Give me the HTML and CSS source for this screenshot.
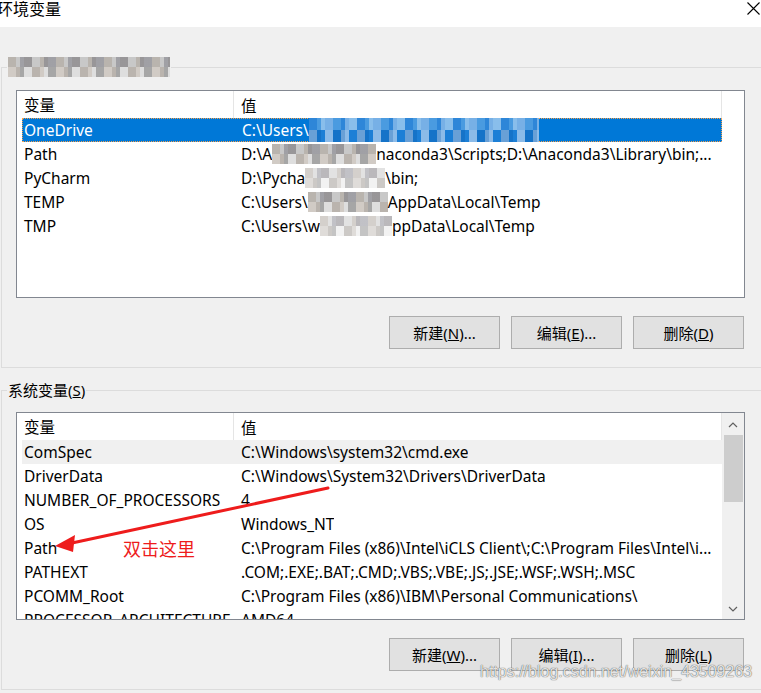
FILE: index.html
```html
<!DOCTYPE html>
<html>
  <head>
    <meta charset="UTF-8">
    <title>环境变量</title>
    <link rel="stylesheet" href="styles.css">
  </head>
  <body>
    <div class="titlebar">
      <span class="title">环境变量</span>
      <svg class="close" width="13" height="13" viewBox="0 0 13 13">
        <path d="M0.5 0.5 L12.5 12.5 M12.5 0.5 L0.5 12.5" stroke="#000" stroke-width="1.1" fill="none"/>
      </svg>
    </div>

    <fieldset class="group first">
      <legend><span class="mz mz-gray legend-blur"></span></legend>
      <div class="inner">
        <div class="list">
          <div class="list-main">
            <div class="row head"><span class="c1">变量</span><span class="c2">值</span></div>
            <div class="row sel"><span class="c1">OneDrive</span><span class="c2">C:\Users\<span class="mz mz-blue" style="width:230px"></span></span></div>
            <div class="row"><span class="c1">Path</span><span class="c2">D:\A<span class="mz mz-gray" style="width:104px"></span>naconda3\Scripts;D:\Anaconda3\Library\bin;...</span></div>
            <div class="row"><span class="c1">PyCharm</span><span class="c2">D:\Pycha<span class="mz mz-light" style="width:80px"></span>\bin;</span></div>
            <div class="row"><span class="c1">TEMP</span><span class="c2">C:\Users\<span class="mz mz-gray" style="width:80px"></span>AppData\Local\Temp</span></div>
            <div class="row"><span class="c1">TMP</span><span class="c2">C:\Users\w<span class="mz mz-light" style="width:72px"></span>ppData\Local\Temp</span></div>
          </div>
        </div>
        <div class="buttons">
          <button>新建(<u>N</u>)...</button>
          <button>编辑(<u>E</u>)...</button>
          <button>删除(<u>D</u>)</button>
        </div>
      </div>
    </fieldset>

    <fieldset class="group second">
      <legend>系统变量(<u>S</u>)</legend>
      <div class="inner">
        <div class="list">
          <div class="list-main">
            <div class="row head"><span class="c1">变量</span><span class="c2">值</span></div>
            <div class="row hover"><span class="c1">ComSpec</span><span class="c2">C:\Windows\system32\cmd.exe</span></div>
            <div class="row"><span class="c1">DriverData</span><span class="c2">C:\Windows\System32\Drivers\DriverData</span></div>
            <div class="row"><span class="c1">NUMBER_OF_PROCESSORS</span><span class="c2">4</span></div>
            <div class="row"><span class="c1">OS</span><span class="c2">Windows_NT</span></div>
            <div class="row"><span class="c1">Path</span><span class="c2">C:\Program Files (x86)\Intel\iCLS Client\;C:\Program Files\Intel\i...</span></div>
            <div class="row"><span class="c1">PATHEXT</span><span class="c2">.COM;.EXE;.BAT;.CMD;.VBS;.VBE;.JS;.JSE;.WSF;.WSH;.MSC</span></div>
            <div class="row"><span class="c1">PCOMM_Root</span><span class="c2">C:\Program Files (x86)\IBM\Personal Communications\</span></div>
            <div class="row"><span class="c1">PROCESSOR_ARCHITECTURE</span><span class="c2">AMD64</span></div>
          </div>
          <div class="scrollbar">
            <svg width="20" height="20" viewBox="0 0 20 20"><path d="M6 12 L10 8 L14 12" stroke="#606060" stroke-width="1.2" fill="none"/></svg>
            <div class="track"><div class="thumb"></div></div>
            <svg width="20" height="20" viewBox="0 0 20 20"><path d="M6 8 L10 12 L14 8" stroke="#606060" stroke-width="1.2" fill="none"/></svg>
          </div>
        </div>
        <div class="buttons">
          <button>新建(<u>W</u>)...</button>
          <button>编辑(<u>I</u>)...</button>
          <button>删除(<u>L</u>)</button>
        </div>
      </div>
    </fieldset>

    <!-- annotation drawn on top of the screenshot -->
    <svg class="arrow" width="761" height="693" viewBox="0 0 761 693">
      <path d="M328 488 L72 543" stroke="#ee1c1c" stroke-width="3" stroke-linecap="round" fill="none"/>
      <path d="M55 546 L75 535 L73 552 Z" fill="#ee1c1c"/>
    </svg>
    <div class="note">双击这里</div>
    <div class="watermark">https://blog.csdn.net/weixin_43509263</div>
  </body>
</html>
```

FILE: styles.css
```css
body {
  margin: 0;
  height: 693px;
  overflow: hidden;
  background: #f0f0f0;
  font-family: "Noto Sans", "Noto Sans CJK SC", sans-serif;
  font-size: 15.5px;
  color: #000;
  position: relative;
}

.titlebar {
  height: 27px;
  background: #fff;
  display: flex;
  justify-content: space-between;
  align-items: flex-start;
}

.title {
  font-size: 16px;
  line-height: 19px;
  margin-left: -3px;
}

.close {
  margin: 2px 1px 0 0;
}

.group {
  margin: 0 -3px 0 1px;
  padding: 13px 0 18px 14px;
  border: 1px solid #dcdcdc;
  min-width: 0;
}

.group.first {
  margin-top: 30px;
}

.group.second {
  margin-top: 12px;
  padding-top: 12px;
}

.group legend {
  height: 20px;
  line-height: 20px;
  padding: 0 1px;
  margin-left: -9px;
  font-size: 15px;
}

.legend-blur {
  width: 162px;
  height: 20px;
  vertical-align: top;
}

.inner {
  width: 729px;
}

.list {
  display: flex;
  height: 208px;
  box-sizing: border-box;
  border: 1px solid #828790;
  background: #fff;
  padding-left: 5px;
  overflow: hidden;
}

.list-main {
  width: 700px;
  flex: none;
}

.row {
  display: flex;
  align-items: center;
  height: 24px;
  white-space: nowrap;
  box-sizing: border-box;
}

.row.head {
  height: 27px;
}

.c1 {
  width: 212px;
  flex: none;
  padding-left: 2px;
  box-sizing: border-box;
  overflow: hidden;
}

.c2 {
  padding-left: 7px;
  display: flex;
  align-items: center;
  overflow: hidden;
}

.head .c1 {
  border-right: 1px solid #e5e5e5;
  height: 27px;
  line-height: 29px;
}

.head .c2 {
  flex: 1;
  height: 27px;
  border-right: 1px solid #e5e5e5;
  padding-top: 2px;
  box-sizing: border-box;
}

.row.sel {
  background: #0078d7;
  color: #fff;
  border: 1px dotted #f5a04d;
}

.row.sel .c1 {
  padding-left: 1px;
}

.row.hover {
  background: #f0f0f0;
}

.scrollbar {
  width: 22px;
  flex: none;
  margin-left: auto;
  background: #f0f0f0;
  display: flex;
  flex-direction: column;
  align-items: center;
  padding-top: 2px;
}

.scrollbar .track {
  flex: 1;
  width: 19px;
}

.scrollbar .thumb {
  height: 67px;
  background: #cdcdcd;
}

.buttons {
  display: flex;
  justify-content: flex-end;
  gap: 11px;
  margin-top: 18px;
  padding-right: 1px;
}

.buttons button {
  width: 111px;
  height: 33px;
  background: #e1e1e1;
  border: 1px solid #adadad;
  font-family: inherit;
  font-size: 15px;
  color: #000;
  padding: 0;
}

/* pixelated blur from the original screenshot */
.mz {
  display: inline-block;
  height: 20px;
  flex: none;
}

.mz-gray {
  background:
    conic-gradient(rgba(120,120,130,.5) 25%, transparent 0 50%, rgba(200,190,180,.6) 0 75%, transparent 0) 0 0/24px 20px,
    conic-gradient(#c8c8c8 25%, #a6a6a6 0 50%, #dedede 0 75%, #b9b4ae 0) 0 0/16px 20px;
}

.mz-light {
  background:
    conic-gradient(rgba(160,160,170,.5) 25%, transparent 0 50%, rgba(210,205,200,.6) 0 75%, transparent 0) 0 0/24px 20px,
    conic-gradient(#e2e2e2 25%, #c4c4c4 0 50%, #f2f2f2 0 75%, #d4d0cc 0) 0 0/16px 20px;
}

.mz-blue {
  background:
    conic-gradient(rgba(255,255,255,.35) 25%, transparent 0 50%, rgba(0,80,160,.25) 0 75%, transparent 0) 0 0/24px 24px,
    conic-gradient(#4a9be0 25%, #1c7fd6 0 50%, #8cbbe8 0 75%, #2e86d8 0) 0 0/16px 24px;
  height: 24px;
}

.arrow {
  position: absolute;
  left: 0;
  top: 0;
  pointer-events: none;
}

.note {
  position: absolute;
  left: 123px;
  top: 538px;
  color: #ee1c1c;
  font-size: 18px;
  line-height: 22px;
}

.watermark {
  position: absolute;
  left: 480px;
  top: 663px;
  font-family: "Liberation Sans", sans-serif;
  font-size: 16px;
  color: rgba(255, 255, 255, 0.85);
  text-shadow: 0 0 1px rgba(0, 0, 0, 0.6), 0 0 1px rgba(0, 0, 0, 0.4);
}
```
